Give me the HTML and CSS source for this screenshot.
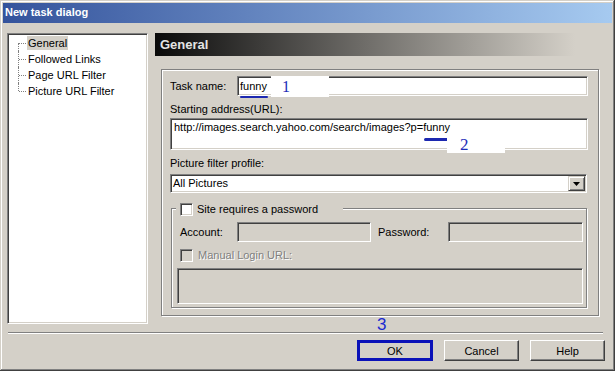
FILE: index.html
```html
<!DOCTYPE html>
<html lang="en">
<head>
    <meta charset="UTF-8">
    <title>New task dialog</title>
    <link rel="stylesheet" href="styles.css">
</head>
<body>
    <div class="window">
        <div class="titlebar">New task dialog</div>

        <div class="main">
            <div class="tree">
                <ul>
                    <li><span class="sel">General</span></li>
                    <li>Followed Links</li>
                    <li>Page URL Filter</li>
                    <li>Picture URL Filter</li>
                </ul>
            </div>

            <div class="page">
                <div class="page-head">General</div>
                <div class="group">
                    <div class="row">
                        <span class="lbl-task">Task name:</span>
                        <div class="field task-field">funny
                            <span class="mark mark-1"></span>
                            <span class="note note-1">1</span>
                        </div>
                    </div>

                    <div class="caption">Starting address(URL):</div>
                    <div class="field url-field">http://images.search.yahoo.com/search/images?p=funny
                        <span class="mark mark-2"></span>
                        <span class="note note-2">2</span>
                    </div>

                    <div class="caption">Picture filter profile:</div>
                    <div class="field combo">
                        <span class="combo-text">All Pictures</span>
                        <span class="combo-btn">
                            <svg width="7" height="4" viewBox="0 0 7 4"><path d="M0 0h7L3.5 4z" fill="#000"/></svg>
                        </span>
                    </div>

                    <div class="pwbox">
                        <div class="pw-legend">
                            <span class="check"></span>
                            <span>Site requires a password</span>
                        </div>
                        <div class="row pw-row">
                            <span class="lbl-acc">Account:</span>
                            <div class="field off acc-field"></div>
                            <span class="lbl-pass">Password:</span>
                            <div class="field off pass-field"></div>
                        </div>
                        <div class="row login-row">
                            <span class="check off"></span>
                            <span class="disabled">Manual Login URL:</span>
                        </div>
                        <div class="field off login-field"></div>
                    </div>
                </div>
            </div>
        </div>

        <div class="sep">
            <span class="note note-3">3</span>
        </div>

        <div class="buttons">
            <button class="btn btn-ok">OK</button>
            <button class="btn">Cancel</button>
            <button class="btn">Help</button>
        </div>
    </div>
</body>
</html>
```

FILE: styles.css
```css
body {
    margin: 0;
    font-family: "Liberation Sans", Arial, sans-serif;
    font-size: 11px;
    color: #000;
    background: #d4d0c8;
}

.window {
    width: 615px;
    height: 371px;
    box-sizing: border-box;
    padding: 3px;
    display: flex;
    flex-direction: column;
    background: #d4d0c8;
    box-shadow: inset -1px -1px #404040, inset 1px 1px #d4d0c8,
                inset -2px -2px #808080, inset 2px 2px #fff;
}

.titlebar {
    height: 20px;
    line-height: 18px;
    padding-left: 2px;
    color: #fff;
    font-weight: bold;
    background: linear-gradient(to right, #34539c, #a6caf0);
}

.main {
    display: flex;
    height: 291px;
    margin-top: 10px;
}

/* left tree */
.tree {
    width: 141px;
    margin-left: 4px;
    box-sizing: border-box;
    padding: 1px 0 0 1px;
    background: #fff;
    border: 1px solid;
    border-color: #808080 #fff #fff #808080;
    box-shadow: inset 1px 1px #404040, inset -1px -1px #d4d0c8;
}
.tree ul {
    list-style: none;
    margin: 0;
    padding: 0;
}
.tree li {
    position: relative;
    height: 16px;
    line-height: 16px;
    padding-left: 19px;
}
.tree li::before {
    content: "";
    position: absolute;
    left: 9px;
    top: 0;
    height: 16px;
    border-left: 1px dotted #808080;
}
.tree li:first-child::before {
    top: 8px;
    height: 8px;
}
.tree li:last-child::before {
    height: 8px;
}
.tree li::after {
    content: "";
    position: absolute;
    left: 10px;
    top: 8px;
    width: 7px;
    border-top: 1px dotted #808080;
}
.sel {
    background: #d4d0c8;
    padding: 1px 1px;
    margin-left: -1px;
}

/* right page */
.page {
    width: 450px;
    margin-left: 7px;
}
.page-head {
    width: 420px;
    height: 23px;
    line-height: 23px;
    box-sizing: border-box;
    padding-left: 5px;
    font-size: 13px;
    font-weight: bold;
    color: #e4e4e4;
    background: linear-gradient(to right, #0a0a0a, #d4d0c8);
}
.group {
    width: 438px;
    height: 247px;
    margin: 13px 0 0 6px;
    box-sizing: border-box;
    padding: 6px 10px 0 8px;
    border: 1px solid #808080;
    box-shadow: inset 1px 1px #fff, 1px 1px #fff;
}

.row {
    display: flex;
    align-items: center;
}
.caption {
    line-height: 13px;
    margin-top: 7px;
}

.field {
    position: relative;
    box-sizing: border-box;
    background: #fff;
    border: 1px solid;
    border-color: #808080 #fff #fff #808080;
    box-shadow: inset 1px 1px #404040, inset -1px -1px #d4d0c8;
}
.field.off {
    background: #d4d0c8;
}

.lbl-task {
    width: 67px;
}
.task-field {
    flex: 1;
    height: 20px;
    line-height: 18px;
    padding: 0 2px;
}
.url-field {
    height: 32px;
    margin-top: 2px;
    padding: 2px 3px;
    line-height: 13px;
}

.combo {
    display: flex;
    height: 19px;
    margin: 4px 1px 0 0;
    padding-left: 2px;
    line-height: 17px;
}
.combo-btn {
    width: 17px;
    height: 15px;
    margin: 1px 1px 1px auto;
    box-sizing: border-box;
    display: flex;
    align-items: center;
    justify-content: center;
    background: #d4d0c8;
    border: 1px solid;
    border-color: #d4d0c8 #404040 #404040 #d4d0c8;
    box-shadow: inset 1px 1px #fff, inset -1px -1px #808080;
}

/* password box */
.pwbox {
    position: relative;
    height: 100px;
    margin: 15px 1px 0 1px;
    box-sizing: border-box;
    padding: 13px 3px 0 5px;
    border: 1px solid #808080;
    box-shadow: inset 1px 1px #fff, 1px 1px #fff;
}
.pw-legend {
    position: absolute;
    top: -6px;
    left: 4px;
    width: 163px;
    height: 13px;
    padding-left: 4px;
    display: flex;
    align-items: center;
    gap: 4px;
    line-height: 13px;
    background: #d4d0c8;
}
.check {
    width: 13px;
    height: 13px;
    box-sizing: border-box;
    background: #fff;
    border: 1px solid;
    border-color: #808080 #fff #fff #808080;
    box-shadow: inset 1px 1px #404040, inset -1px -1px #d4d0c8;
}
.check.off {
    background: #d4d0c8;
}
.pw-row {
    padding-left: 3px;
}
.lbl-acc {
    width: 57px;
}
.acc-field {
    width: 134px;
    height: 20px;
}
.lbl-pass {
    width: 70px;
    margin-left: 7px;
}
.pass-field {
    width: 135px;
    height: 20px;
}
.login-row {
    margin-top: 7px;
    padding-left: 3px;
    gap: 5px;
    line-height: 13px;
}
.disabled {
    color: #808080;
    text-shadow: 1px 1px #fff;
}
.login-field {
    height: 36px;
    margin-top: 6px;
}

/* footer */
.sep {
    position: relative;
    margin: 8px 9px 0 5px;
    border-top: 1px solid #808080;
    border-bottom: 1px solid #fff;
}
.buttons {
    display: flex;
    justify-content: flex-end;
    gap: 11px;
    margin: 6px 7px 0 0;
}
.btn {
    width: 75px;
    height: 21px;
    box-sizing: border-box;
    padding: 0;
    font: inherit;
    color: #000;
    background: #d4d0c8;
    border: 1px solid;
    border-color: #fff #404040 #404040 #fff;
    box-shadow: inset -1px -1px #808080, inset 1px 1px #d4d0c8;
}
.btn-ok {
    width: 76px;
    border: 3px solid #0b12b8;
    box-shadow: none;
}

/* blue hand annotations */
.mark {
    position: absolute;
    background: #1c28b0;
    border-radius: 2px;
}
.mark-1 {
    left: 2px;
    top: 19px;
    width: 28px;
    height: 2px;
}
.mark-2 {
    left: 253px;
    top: 19px;
    width: 29px;
    height: 3px;
}
.note {
    position: absolute;
    color: #1c2cb8;
    font-family: "Liberation Serif", "Times New Roman", serif;
}
.note-1 {
    left: 33px;
    top: -1px;
    width: 47px;
    height: 21px;
    padding-left: 11px;
    font-size: 16px;
    line-height: 21px;
    background: #fff;
}
.note-2 {
    left: 276px;
    top: 16px;
    width: 45px;
    height: 18px;
    padding-left: 13px;
    font-size: 17px;
    line-height: 19px;
    background: #fff;
}
.note-3 {
    left: 369px;
    top: -17px;
    font-family: "Liberation Sans", Arial, sans-serif;
    font-size: 17px;
    line-height: 17px;
    color: #1a2ad0;
}
```
